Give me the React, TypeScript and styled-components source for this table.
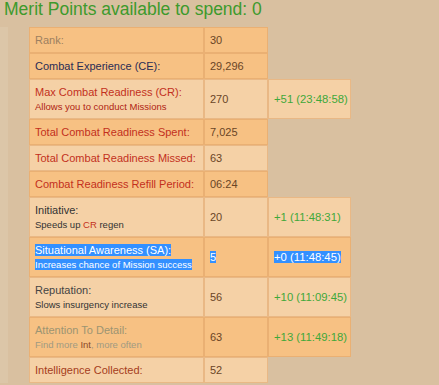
import React from 'react';
import styled, { createGlobalStyle } from 'styled-components';

type Tone = 'dark' | 'light';
type LabelColor = 'muted' | 'navy' | 'red' | 'ink' | 'grey' | 'olive' | 'rust';

interface IStat {
    label: string;
    labelColor: LabelColor;
    note?: React.ReactNode;
    value: string;
    gain?: string;
    tone: Tone;
    selected?: boolean;
}

const GlobalStyle = createGlobalStyle`
    body {
        margin: 0;
        background-color: #d9c0a0;
        font-family: Arial, 'Liberation Sans', sans-serif;
    }
`;

const RedNote = styled.span`
    color: #b01e12;
`;

const FadedNote = styled.span`
    color: #a09a82;
`;

const IntWord = styled.span`
    color: #8c4a2a;
`;

const Accent = styled.span`
    color: #c3301d;
`;

const labelColors: Record<LabelColor, string> = {
    muted: '#9c7f60',
    navy: '#2a2c55',
    red: '#c3301d',
    ink: '#333333',
    grey: '#444444',
    olive: '#9c9472',
    rust: '#a53d1c',
};

const stats: IStat[] = [
    { label: 'Rank:', labelColor: 'muted', value: '30', tone: 'dark' },
    { label: 'Combat Experience (CE):', labelColor: 'navy', value: '29,296', tone: 'dark' },
    {
        label: 'Max Combat Readiness (CR):',
        labelColor: 'red',
        note: <RedNote>Allows you to conduct Missions</RedNote>,
        value: '270',
        gain: '+51 (23:48:58)',
        tone: 'light',
    },
    { label: 'Total Combat Readiness Spent:', labelColor: 'red', value: '7,025', tone: 'dark' },
    { label: 'Total Combat Readiness Missed:', labelColor: 'red', value: '63', tone: 'light' },
    { label: 'Combat Readiness Refill Period:', labelColor: 'red', value: '06:24', tone: 'dark' },
    {
        label: 'Initiative:',
        labelColor: 'ink',
        note: (
            <>
                Speeds up <Accent>CR</Accent> regen
            </>
        ),
        value: '20',
        gain: '+1 (11:48:31)',
        tone: 'light',
    },
    {
        label: 'Situational Awareness (SA):',
        labelColor: 'ink',
        note: 'Increases chance of Mission success',
        value: '5',
        gain: '+0 (11:48:45)',
        tone: 'dark',
        selected: true,
    },
    {
        label: 'Reputation:',
        labelColor: 'grey',
        note: 'Slows insurgency increase',
        value: '56',
        gain: '+10 (11:09:45)',
        tone: 'light',
    },
    {
        label: 'Attention To Detail:',
        labelColor: 'olive',
        note: (
            <FadedNote>
                Find more <IntWord>Int</IntWord>, more often
            </FadedNote>
        ),
        value: '63',
        gain: '+13 (11:49:18)',
        tone: 'dark',
    },
    { label: 'Intelligence Collected:', labelColor: 'rust', value: '52', tone: 'light' },
];

const App: React.FC = () => {
    return (
        <>
            <GlobalStyle />
            <Title>Merit Points available to spend: 0</Title>
            <Panel>
                <StatsTable>
                    <colgroup>
                        <col style={{ width: 175 }} />
                        <col style={{ width: 64 }} />
                        <col style={{ width: 83 }} />
                    </colgroup>
                    <tbody>
                        {stats.map((stat) => (
                            <tr key={stat.label}>
                                <Cell tone={stat.tone}>
                                    <Label color={labelColors[stat.labelColor]}>
                                        {stat.selected ? <Picked>{stat.label}</Picked> : stat.label}
                                    </Label>
                                    {stat.note && (
                                        <Note>
                                            {stat.selected ? <Picked>{stat.note}</Picked> : stat.note}
                                        </Note>
                                    )}
                                </Cell>
                                <Cell tone={stat.tone}>
                                    <Value>{stat.selected ? <Picked>{stat.value}</Picked> : stat.value}</Value>
                                </Cell>
                                {stat.gain && (
                                    <Cell tone={stat.tone}>
                                        <Gain>{stat.selected ? <Picked>{stat.gain}</Picked> : stat.gain}</Gain>
                                    </Cell>
                                )}
                            </tr>
                        ))}
                    </tbody>
                </StatsTable>
            </Panel>
        </>
    );
};

const Title = styled.div`
    padding: 0 0 0 4px;
    height: 27px;

    font-size: 17.5px;
    line-height: 19px;
    color: #3d9a2c;
`;

const Panel = styled.div`
    padding-left: 21px;
    border-left: 8px solid #dcc6a8;
`;

const StatsTable = styled.table`
    table-layout: fixed;
    border-collapse: separate;
    border-spacing: 0;
    width: 322px;
`;

const Cell = styled.td<{ tone: Tone }>`
    padding: 5px 4px 5px 5px;

    background-color: ${(props) => (props.tone === 'dark' ? '#f7c183' : '#f5d1a6')};
    border: 1px solid rgba(221, 160, 100, 0.5);

    vertical-align: middle;
`;

const Label = styled.div<{ color: string }>`
    font-size: 11px;
    line-height: 14px;
    color: ${(props) => props.color};
    white-space: nowrap;
`;

const Note = styled.div`
    margin-bottom: -2px;

    font-size: 9.5px;
    line-height: 16px;
    color: #333333;
    white-space: nowrap;
`;

const Value = styled.div`
    font-size: 11px;
    line-height: 14px;
    color: #6a4526;
`;

const Gain = styled.div`
    font-size: 11.3px;
    line-height: 14px;
    color: #3fa83a;
    white-space: nowrap;
`;

const Picked = styled.span`
    background-color: #3390ff;
    color: #ffffff;
`;

export default App;
